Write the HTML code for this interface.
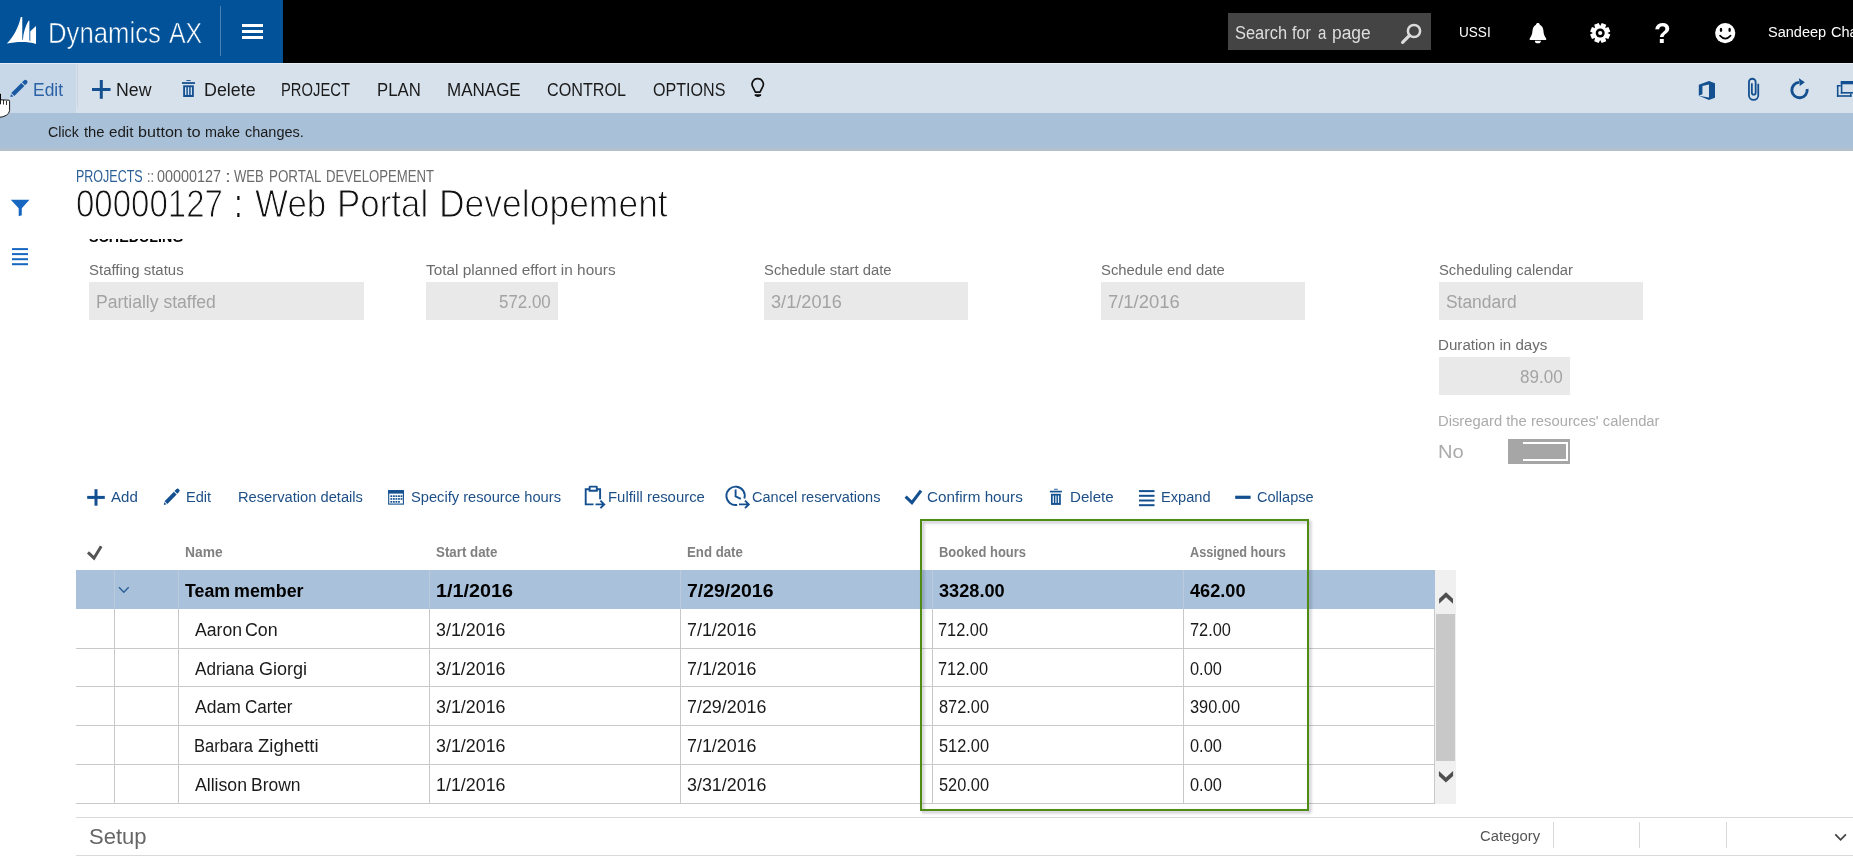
<!DOCTYPE html>
<html><head><meta charset="utf-8"><title>Dynamics AX</title>
<style>
html,body{margin:0;padding:0;background:#fff;}
body{width:1853px;height:865px;position:relative;overflow:hidden;font-family:"Liberation Sans",sans-serif;}
.t{position:absolute;white-space:nowrap;line-height:1;transform-origin:0 0;display:block;}
.b{position:absolute;display:block;}
</style></head><body>
<div class="b" style="left:0px;top:0px;width:1853px;height:63px;background:#000;"></div>
<div class="b" style="left:0px;top:0px;width:283px;height:63px;background:#02529a;"></div>
<div class="b" style="left:219.5px;top:6px;width:1.5px;height:50px;background:rgba(255,255,255,0.28);"></div>
<div class="b" style="left:242px;top:24px;width:21px;height:3px;background:#fff;"></div>
<div class="b" style="left:242px;top:30px;width:21px;height:3px;background:#fff;"></div>
<div class="b" style="left:242px;top:36px;width:21px;height:3px;background:#fff;"></div>
<span class="t" style="left:47.94px;top:19.00px;font-size:29px;color:#fff;transform:scaleX(0.8865);-webkit-text-stroke:0.55px #02529a;">Dynamics</span>
<span class="t" style="left:168.90px;top:19.00px;font-size:29px;color:#fff;transform:scaleX(0.8581);-webkit-text-stroke:0.55px #02529a;">AX</span>
<div class="b" style="left:1228px;top:13px;width:203px;height:37px;background:#444444;"></div>
<span class="t" style="left:1234.96px;top:24.00px;font-size:18px;color:#dedede;transform:scaleX(0.9129);">Search</span>
<span class="t" style="left:1292.46px;top:24.00px;font-size:18px;color:#dedede;transform:scaleX(0.8957);">for</span>
<span class="t" style="left:1317.60px;top:24.00px;font-size:18px;color:#dedede;transform:scaleX(0.8306);">a</span>
<span class="t" style="left:1331.67px;top:24.00px;font-size:18px;color:#dedede;transform:scaleX(0.9666);">page</span>
<span class="t" style="left:1459.28px;top:24.00px;font-size:15.5px;color:#fff;transform:scaleX(0.8761);">USSI</span>
<span class="t" style="left:1768.25px;top:24.00px;font-size:15.5px;color:#fff;transform:scaleX(0.9373);">Sandeep</span>
<span class="t" style="left:1830.77px;top:24.00px;font-size:15.5px;color:#fff;transform:scaleX(0.9373);">Chandra</span>
<div class="b" style="left:0px;top:63px;width:1853px;height:50px;background:#d7e1ec;"></div>
<div class="b" style="left:0px;top:63px;width:76px;height:50px;background:#c9d8e8;"></div>
<span class="t" style="left:33.11px;top:81.00px;font-size:18px;color:#2a62a5;transform:scaleX(0.9684);">Edit</span>
<span class="t" style="left:116.28px;top:81.00px;font-size:18px;color:#1a1a1a;transform:scaleX(0.9841);">New</span>
<span class="t" style="left:203.57px;top:81.00px;font-size:18px;color:#1a1a1a;transform:scaleX(0.9906);">Delete</span>
<span class="t" style="left:281.42px;top:81.00px;font-size:18px;color:#1a1a1a;transform:scaleX(0.8203);">PROJECT</span>
<span class="t" style="left:377.16px;top:81.00px;font-size:18px;color:#1a1a1a;transform:scaleX(0.9297);">PLAN</span>
<span class="t" style="left:446.74px;top:81.00px;font-size:18px;color:#1a1a1a;transform:scaleX(0.9448);">MANAGE</span>
<span class="t" style="left:546.79px;top:81.00px;font-size:18px;color:#1a1a1a;transform:scaleX(0.8974);">CONTROL</span>
<span class="t" style="left:652.78px;top:81.00px;font-size:18px;color:#1a1a1a;transform:scaleX(0.8932);">OPTIONS</span>
<div class="b" style="left:0px;top:113px;width:1853px;height:35px;background:#a9c0d9;"></div>
<div class="b" style="left:0px;top:148px;width:1853px;height:3px;background:#b3c1ce;"></div>
<div class="b" style="left:0px;top:63px;width:1853px;height:1px;background:#e6edf5;"></div>
<div class="b" style="left:77px;top:64px;width:1px;height:43px;background:#c9d3df;"></div>
<span class="t" style="left:47.79px;top:124.00px;font-size:15.5px;color:#1a1a1a;transform:scaleX(0.9182);">Click</span>
<span class="t" style="left:84.18px;top:124.00px;font-size:15.5px;color:#1a1a1a;transform:scaleX(0.9556);">the</span>
<span class="t" style="left:108.99px;top:124.00px;font-size:15.5px;color:#1a1a1a;transform:scaleX(0.9770);">edit</span>
<span class="t" style="left:138.35px;top:124.00px;font-size:15.5px;color:#1a1a1a;transform:scaleX(1.0396);">button</span>
<span class="t" style="left:186.95px;top:124.00px;font-size:15.5px;color:#1a1a1a;transform:scaleX(1.0587);">to</span>
<span class="t" style="left:205.17px;top:124.00px;font-size:15.5px;color:#1a1a1a;transform:scaleX(0.9256);">make</span>
<span class="t" style="left:244.82px;top:124.00px;font-size:15.5px;color:#1a1a1a;transform:scaleX(0.9353);">changes.</span>
<span class="t" style="left:76.00px;top:169.00px;font-size:15.75px;color:#2b5f96;transform:scaleX(0.7941);">PROJECTS</span>
<span class="t" style="left:146.77px;top:169.00px;font-size:15.75px;color:#6a6a6a;transform:scaleX(0.7958);">::</span>
<span class="t" style="left:157.43px;top:169.00px;font-size:15.75px;color:#6a6a6a;transform:scaleX(0.9116);">00000127</span>
<span class="t" style="left:225.11px;top:169.00px;font-size:15.75px;color:#6a6a6a;transform:scaleX(1.3367);">:</span>
<span class="t" style="left:234.13px;top:169.00px;font-size:15.75px;color:#6a6a6a;transform:scaleX(0.8294);">WEB</span>
<span class="t" style="left:268.53px;top:169.00px;font-size:15.75px;color:#6a6a6a;transform:scaleX(0.8505);">PORTAL</span>
<span class="t" style="left:326.25px;top:169.00px;font-size:15.75px;color:#6a6a6a;transform:scaleX(0.8346);">DEVELOPEMENT</span>
<span class="t" style="left:76.28px;top:184.00px;font-size:39px;color:#111;transform:scaleX(0.8469);-webkit-text-stroke:1.05px #fff;">00000127</span>
<span class="t" style="left:234.52px;top:184.00px;font-size:39px;color:#111;transform:scaleX(0.6208);">:</span>
<span class="t" style="left:254.53px;top:184.00px;font-size:39px;color:#111;transform:scaleX(0.8968);-webkit-text-stroke:1.05px #fff;">Web</span>
<span class="t" style="left:336.91px;top:184.00px;font-size:39px;color:#111;transform:scaleX(0.8946);-webkit-text-stroke:1.05px #fff;">Portal</span>
<span class="t" style="left:439.06px;top:184.00px;font-size:39px;color:#111;transform:scaleX(0.9095);-webkit-text-stroke:1.05px #fff;">Developement</span>
<div class="b" style="left:80px;top:239px;width:200px;height:8px;overflow:hidden;">
<span class="t" style="left:8.77px;top:-10.00px;font-size:15px;color:#000;transform:scaleX(0.9519);font-weight:bold;">SCHEDULING</span>
</div>
<span class="t" style="left:88.58px;top:262.00px;font-size:15.5px;color:#6c6c6c;transform:scaleX(0.9662);">Staffing status</span>
<div class="b" style="left:89px;top:282px;width:275px;height:38px;background:#e9e9e9;"></div>
<span class="t" style="left:95.59px;top:293.00px;font-size:18px;color:#a3a3a3;transform:scaleX(0.9766);">Partially staffed</span>
<span class="t" style="left:425.94px;top:262.00px;font-size:15.5px;color:#6c6c6c;transform:scaleX(0.9925);">Total planned effort in hours</span>
<div class="b" style="left:426px;top:282px;width:132px;height:38px;background:#e9e9e9;"></div>
<span class="t" style="left:498.82px;top:293.00px;font-size:18px;color:#a3a3a3;transform:scaleX(0.9399);">572.00</span>
<span class="t" style="left:763.58px;top:262.00px;font-size:15.5px;color:#6c6c6c;transform:scaleX(0.9554);">Schedule start date</span>
<div class="b" style="left:764px;top:282px;width:204px;height:38px;background:#e9e9e9;"></div>
<span class="t" style="left:771.02px;top:293.00px;font-size:18px;color:#a3a3a3;transform:scaleX(1.0098);">3/1/2016</span>
<span class="t" style="left:1100.58px;top:262.00px;font-size:15.5px;color:#6c6c6c;transform:scaleX(0.9580);">Schedule end date</span>
<div class="b" style="left:1101px;top:282px;width:204px;height:38px;background:#e9e9e9;"></div>
<span class="t" style="left:1108.33px;top:293.00px;font-size:18px;color:#a3a3a3;transform:scaleX(1.0234);">7/1/2016</span>
<span class="t" style="left:1438.73px;top:262.00px;font-size:15.5px;color:#6c6c6c;transform:scaleX(0.9541);">Scheduling calendar</span>
<div class="b" style="left:1439px;top:282px;width:204px;height:38px;background:#e9e9e9;"></div>
<span class="t" style="left:1445.97px;top:293.00px;font-size:18px;color:#a3a3a3;transform:scaleX(0.9669);">Standard</span>
<span class="t" style="left:1438.19px;top:337.00px;font-size:15.5px;color:#6c6c6c;transform:scaleX(0.9764);">Duration in days</span>
<div class="b" style="left:1439px;top:357px;width:131px;height:38px;background:#e9e9e9;"></div>
<span class="t" style="left:1520.48px;top:368.00px;font-size:18px;color:#a3a3a3;transform:scaleX(0.9470);">89.00</span>
<span class="t" style="left:1438.22px;top:413.00px;font-size:15.5px;color:#ababab;transform:scaleX(0.9543);">Disregard the resources' calendar</span>
<span class="t" style="left:1437.79px;top:443.00px;font-size:18px;color:#ababab;transform:scaleX(1.1159);">No</span>
<div class="b" style="left:1508px;top:439px;width:62px;height:25px;background:#a6a6a6;"></div>
<div class="b" style="left:1523px;top:441.5px;width:42.5px;height:15px;border:2.5px solid #fff;border-left:none;"></div>
<span class="t" style="left:111.00px;top:489.00px;font-size:15.5px;color:#1d4f87;transform:scaleX(0.9706);">Add</span>
<span class="t" style="left:185.74px;top:489.00px;font-size:15.5px;color:#1d4f87;transform:scaleX(0.9391);">Edit</span>
<span class="t" style="left:238.07px;top:489.00px;font-size:15.5px;color:#1d4f87;transform:scaleX(0.9477);">Reservation details</span>
<span class="t" style="left:410.59px;top:489.00px;font-size:15.5px;color:#1d4f87;transform:scaleX(0.9460);">Specify resource hours</span>
<span class="t" style="left:607.56px;top:489.00px;font-size:15.5px;color:#1d4f87;transform:scaleX(0.9614);">Fulfill resource</span>
<span class="t" style="left:751.77px;top:489.00px;font-size:15.5px;color:#1d4f87;transform:scaleX(0.9377);">Cancel reservations</span>
<span class="t" style="left:927.24px;top:489.00px;font-size:15.5px;color:#1d4f87;transform:scaleX(0.9841);">Confirm hours</span>
<span class="t" style="left:1070.04px;top:489.00px;font-size:15.5px;color:#1d4f87;transform:scaleX(0.9742);">Delete</span>
<span class="t" style="left:1160.58px;top:489.00px;font-size:15.5px;color:#1d4f87;transform:scaleX(0.9444);">Expand</span>
<span class="t" style="left:1257.27px;top:489.00px;font-size:15.5px;color:#1d4f87;transform:scaleX(0.9393);">Collapse</span>
<div class="b" style="left:76px;top:570px;width:1359px;height:39px;background:#a9c1da;"></div>
<div class="b" style="left:1435px;top:570px;width:21px;height:234px;background:#f0f0f0;"></div>
<div class="b" style="left:1436px;top:614px;width:19px;height:146.5px;background:#c8c8c8;"></div>
<div class="b" style="left:76px;top:648px;width:1359px;height:1px;background:#c9c9c9;"></div>
<div class="b" style="left:76px;top:686px;width:1359px;height:1px;background:#c9c9c9;"></div>
<div class="b" style="left:76px;top:725px;width:1359px;height:1px;background:#c9c9c9;"></div>
<div class="b" style="left:76px;top:764px;width:1359px;height:1px;background:#c9c9c9;"></div>
<div class="b" style="left:76px;top:803px;width:1359px;height:1px;background:#c9c9c9;"></div>
<div class="b" style="left:114px;top:609px;width:1px;height:195px;background:#c9c9c9;"></div>
<div class="b" style="left:178px;top:609px;width:1px;height:195px;background:#c9c9c9;"></div>
<div class="b" style="left:429px;top:609px;width:1px;height:195px;background:#c9c9c9;"></div>
<div class="b" style="left:680px;top:609px;width:1px;height:195px;background:#c9c9c9;"></div>
<div class="b" style="left:932px;top:609px;width:1px;height:195px;background:#c9c9c9;"></div>
<div class="b" style="left:1183px;top:609px;width:1px;height:195px;background:#c9c9c9;"></div>
<div class="b" style="left:1434px;top:609px;width:1px;height:195px;background:#c9c9c9;"></div>
<div class="b" style="left:114px;top:570px;width:1px;height:39px;background:#bccbdc;"></div>
<div class="b" style="left:178px;top:570px;width:1px;height:39px;background:#bccbdc;"></div>
<div class="b" style="left:429px;top:570px;width:1px;height:39px;background:#bccbdc;"></div>
<div class="b" style="left:680px;top:570px;width:1px;height:39px;background:#bccbdc;"></div>
<div class="b" style="left:932px;top:570px;width:1px;height:39px;background:#bccbdc;"></div>
<div class="b" style="left:1183px;top:570px;width:1px;height:39px;background:#bccbdc;"></div>
<span class="t" style="left:184.70px;top:545.00px;font-size:14px;color:#808080;transform:scaleX(0.9878);font-weight:bold;">Name</span>
<span class="t" style="left:436.20px;top:545.00px;font-size:14px;color:#808080;transform:scaleX(0.9508);font-weight:bold;">Start date</span>
<span class="t" style="left:687.14px;top:545.00px;font-size:14px;color:#808080;transform:scaleX(0.9449);font-weight:bold;">End date</span>
<span class="t" style="left:938.76px;top:545.00px;font-size:14px;color:#808080;transform:scaleX(0.9243);font-weight:bold;">Booked hours</span>
<span class="t" style="left:1190.18px;top:545.00px;font-size:14px;color:#808080;transform:scaleX(0.9060);font-weight:bold;">Assigned hours</span>
<span class="t" style="left:185.32px;top:582.00px;font-size:18px;color:#000;transform:scaleX(0.9874);font-weight:bold;">Team</span>
<span class="t" style="left:234.44px;top:582.00px;font-size:18px;color:#000;transform:scaleX(0.9930);font-weight:bold;">member</span>
<span class="t" style="left:436.31px;top:582.00px;font-size:18px;color:#000;transform:scaleX(1.0979);font-weight:bold;">1/1/2016</span>
<span class="t" style="left:687.22px;top:582.00px;font-size:18px;color:#000;transform:scaleX(1.0794);font-weight:bold;">7/29/2016</span>
<span class="t" style="left:938.80px;top:582.00px;font-size:18px;color:#000;transform:scaleX(1.0094);font-weight:bold;">3328.00</span>
<span class="t" style="left:1190.23px;top:582.00px;font-size:18px;color:#000;transform:scaleX(1.0076);font-weight:bold;">462.00</span>
<span class="t" style="left:194.75px;top:621.00px;font-size:18px;color:#1a1a1a;transform:scaleX(0.9797);">Aaron</span>
<span class="t" style="left:245.36px;top:621.00px;font-size:18px;color:#1a1a1a;transform:scaleX(0.9900);">Con</span>
<span class="t" style="left:436.29px;top:621.00px;font-size:18px;color:#1a1a1a;transform:scaleX(0.9919);">3/1/2016</span>
<span class="t" style="left:687.11px;top:621.00px;font-size:18px;color:#1a1a1a;transform:scaleX(0.9919);">7/1/2016</span>
<span class="t" style="left:938.43px;top:621.00px;font-size:18px;color:#1a1a1a;transform:scaleX(0.9082);">712.00</span>
<span class="t" style="left:1189.68px;top:621.00px;font-size:18px;color:#1a1a1a;transform:scaleX(0.9082);">72.00</span>
<span class="t" style="left:194.75px;top:660.00px;font-size:18px;color:#1a1a1a;transform:scaleX(0.9515);">Adriana</span>
<span class="t" style="left:258.70px;top:660.00px;font-size:18px;color:#1a1a1a;transform:scaleX(1.0022);">Giorgi</span>
<span class="t" style="left:436.29px;top:660.00px;font-size:18px;color:#1a1a1a;transform:scaleX(0.9919);">3/1/2016</span>
<span class="t" style="left:687.11px;top:660.00px;font-size:18px;color:#1a1a1a;transform:scaleX(0.9919);">7/1/2016</span>
<span class="t" style="left:938.43px;top:660.00px;font-size:18px;color:#1a1a1a;transform:scaleX(0.9082);">712.00</span>
<span class="t" style="left:1189.85px;top:660.00px;font-size:18px;color:#1a1a1a;transform:scaleX(0.9082);">0.00</span>
<span class="t" style="left:194.75px;top:698.00px;font-size:18px;color:#1a1a1a;transform:scaleX(0.9728);">Adam</span>
<span class="t" style="left:244.75px;top:698.00px;font-size:18px;color:#1a1a1a;transform:scaleX(0.9492);">Carter</span>
<span class="t" style="left:436.29px;top:698.00px;font-size:18px;color:#1a1a1a;transform:scaleX(0.9919);">3/1/2016</span>
<span class="t" style="left:687.11px;top:698.00px;font-size:18px;color:#1a1a1a;transform:scaleX(0.9919);">7/29/2016</span>
<span class="t" style="left:938.51px;top:698.00px;font-size:18px;color:#1a1a1a;transform:scaleX(0.9082);">872.00</span>
<span class="t" style="left:1189.85px;top:698.00px;font-size:18px;color:#1a1a1a;transform:scaleX(0.9082);">390.00</span>
<span class="t" style="left:194.28px;top:737.00px;font-size:18px;color:#1a1a1a;transform:scaleX(0.9193);">Barbara</span>
<span class="t" style="left:258.20px;top:737.00px;font-size:18px;color:#1a1a1a;transform:scaleX(1.0264);">Zighetti</span>
<span class="t" style="left:436.29px;top:737.00px;font-size:18px;color:#1a1a1a;transform:scaleX(0.9919);">3/1/2016</span>
<span class="t" style="left:687.11px;top:737.00px;font-size:18px;color:#1a1a1a;transform:scaleX(0.9919);">7/1/2016</span>
<span class="t" style="left:938.60px;top:737.00px;font-size:18px;color:#1a1a1a;transform:scaleX(0.9082);">512.00</span>
<span class="t" style="left:1189.85px;top:737.00px;font-size:18px;color:#1a1a1a;transform:scaleX(0.9082);">0.00</span>
<span class="t" style="left:194.75px;top:776.00px;font-size:18px;color:#1a1a1a;transform:scaleX(0.9809);">Allison</span>
<span class="t" style="left:251.11px;top:776.00px;font-size:18px;color:#1a1a1a;transform:scaleX(0.9686);">Brown</span>
<span class="t" style="left:435.66px;top:776.00px;font-size:18px;color:#1a1a1a;transform:scaleX(0.9919);">1/1/2016</span>
<span class="t" style="left:687.29px;top:776.00px;font-size:18px;color:#1a1a1a;transform:scaleX(0.9919);">3/31/2016</span>
<span class="t" style="left:938.60px;top:776.00px;font-size:18px;color:#1a1a1a;transform:scaleX(0.9082);">520.00</span>
<span class="t" style="left:1189.85px;top:776.00px;font-size:18px;color:#1a1a1a;transform:scaleX(0.9082);">0.00</span>
<div class="b" style="left:920px;top:519px;width:385px;height:288px;border:2px solid #4f8c14;filter:drop-shadow(2px 2px 1.6px rgba(50,40,70,0.34));"></div>
<div class="b" style="left:76px;top:817px;width:1777px;height:1px;background:#d9d9d9;"></div>
<div class="b" style="left:76px;top:855px;width:1777px;height:1px;background:#d9d9d9;"></div>
<span class="t" style="left:88.71px;top:826.00px;font-size:22px;color:#666;transform:scaleX(1.0009);">Setup</span>
<span class="t" style="left:1480.06px;top:828.00px;font-size:15.5px;color:#555;transform:scaleX(0.9557);">Category</span>
<div class="b" style="left:1553px;top:822px;width:1px;height:26px;background:#d8d8d8;"></div>
<div class="b" style="left:1639px;top:822px;width:1px;height:26px;background:#d8d8d8;"></div>
<div class="b" style="left:1726px;top:822px;width:1px;height:26px;background:#d8d8d8;"></div>
<svg class="b" style="left:0;top:0" width="1853" height="865" viewBox="0 0 1853 865"><path d="M6.83 43.62 C13.5 36.5 18.5 27.5 20.78 16.9 L22.26 16.9 L22.26 39.46 L22.86 40.06 C23.3 32.5 25.6 25.8 28.5 20.76 L29.39 20.76 L29.39 40.35 L30.28 41.24 L30.28 31.15 L36.03 26.1 L36.03 43.92 C28 41.3 16 41.6 6.83 43.62 Z" fill="#fff" stroke="none" stroke-width="0" /><circle cx="1414" cy="31" r="6.1" fill="none" stroke="#dcdcdc" stroke-width="2.5"/><path d="M1409.6 35.4 L1402.6 42.4" fill="none" stroke="#dcdcdc" stroke-width="3.2" stroke-linecap="round"/><path d="M1537.9 23 C1539 23 1539.7 23.7 1539.8 24.7 C1542 25.6 1543.2 27.9 1543.4 30.6 C1543.6 34 1544.5 36.5 1546.2 38.4 L1546.2 39.9 L1529.7 39.9 L1529.7 38.4 C1531.4 36.5 1532.3 34 1532.5 30.6 C1532.7 27.9 1533.9 25.6 1536 24.7 C1536.1 23.7 1536.8 23 1537.9 23 Z" fill="#fff" stroke="none" stroke-width="0" /><path d="M1534.9 40.7 A3 2.6 0 0 0 1540.9 40.7 Z" fill="#fff" stroke="none" stroke-width="0" /><path d="M1607.50 33.11 L1610.28 34.56 L1608.43 39.02 L1605.44 38.08 L1605.28 38.24 L1606.22 41.23 L1601.76 43.08 L1600.31 40.30 L1600.09 40.30 L1598.64 43.08 L1594.18 41.23 L1595.12 38.24 L1594.96 38.08 L1591.97 39.02 L1590.12 34.56 L1592.90 33.11 L1592.90 32.89 L1590.12 31.44 L1591.97 26.98 L1594.96 27.92 L1595.12 27.76 L1594.18 24.77 L1598.64 22.92 L1600.09 25.70 L1600.31 25.70 L1601.76 22.92 L1606.22 24.77 L1605.28 27.76 L1605.44 27.92 L1608.43 26.98 L1610.28 31.44 L1607.50 32.89 Z" fill="#fff" stroke="none" stroke-width="0" /><circle cx="1600.2" cy="33" r="4.5" fill="#000"/><circle cx="1600.2" cy="33" r="2.1" fill="#fff"/><circle cx="1725.2" cy="33.1" r="10.1" fill="#fff"/><ellipse cx="1721" cy="29.9" rx="1.25" ry="2.1" fill="#000"/><ellipse cx="1729.6" cy="29.9" rx="1.25" ry="2.1" fill="#000"/><path d="M1720 35.6 Q1725.3 41.6 1730.6 35.6" fill="none" stroke="#000" stroke-width="1.6" stroke-linecap="round"/><g transform="translate(10.4,96.9) rotate(-45.00)" fill="#1a5aa3"><path d="M0 0 L2.45 -1.72 L2.45 1.72 Z"/><rect x="3.38" y="-2.15" width="14.23" height="4.3"/><path d="M18.55 -2.15 L21.18 -2.15 A2.15 2.15 0 0 1 21.18 2.15 L18.55 2.15 Z"/></g><g transform="translate(163.8,504.9) rotate(-45.93)" fill="#14508f"><path d="M0 0 L2.29 -1.56 L2.29 1.56 Z"/><rect x="3.17" y="-1.95" width="13.33" height="3.9"/><path d="M17.37 -1.95 L19.90 -1.95 A1.95 1.95 0 0 1 19.90 1.95 L17.37 1.95 Z"/></g><rect x="92" y="88" width="18.50" height="3.00" fill="#14508f"/><rect x="99.8" y="80" width="3.00" height="18.80" fill="#14508f"/><rect x="87.2" y="495.9" width="17.60" height="3.00" fill="#14508f"/><rect x="94.5" y="489.2" width="3.00" height="16.50" fill="#14508f"/><rect x="186.42" y="80.1" width="4.16" height="0.93" fill="#14508f"/><rect x="182" y="82.128" width="13.00" height="1.77" fill="#14508f"/><rect x="183.17" y="85.339" width="10.66" height="11.66" fill="#14508f"/><rect x="185.00885" y="87.198" width="1.33" height="7.77" fill="#cfe0f2"/><rect x="187.83375" y="87.198" width="1.33" height="7.77" fill="#cfe0f2"/><rect x="190.65865000000002" y="87.198" width="1.33" height="7.77" fill="#cfe0f2"/><rect x="1053.98" y="488.8" width="3.84" height="0.89" fill="#14508f"/><rect x="1049.9" y="490.732" width="12.00" height="1.69" fill="#14508f"/><rect x="1050.98" y="493.791" width="9.84" height="11.11" fill="#14508f"/><rect x="1052.6774" y="495.562" width="1.23" height="7.41" fill="#e3eefa"/><rect x="1055.285" y="495.562" width="1.23" height="7.41" fill="#e3eefa"/><rect x="1057.8926000000001" y="495.562" width="1.23" height="7.41" fill="#e3eefa"/><path d="M757.7 78.7 A5.6 5.6 0 0 1 762.4 87.4 L760 92.2 L755.4 92.2 L753 87.4 A5.6 5.6 0 0 1 757.7 78.7 Z" fill="none" stroke="#111" stroke-width="1.7" stroke-linejoin="round"/><path d="M754.7 94.2 L761.1 94.2 L761.1 95.3 Q760.3 97 757.9 97 Q755.5 97 754.7 95.3 Z" fill="#111" stroke="none" stroke-width="0" /><path d="M1698.80 95.65 L1698.80 84.78 L1708.98 81.00 L1715.00 83.13 L1715.00 97.69 L1708.98 99.90 L1698.80 95.65 L1708.98 97.54 L1708.98 84.39 L1702.43 86.12 L1702.43 94.31 Z" fill="#14508f" stroke="none" stroke-width="0" fill-rule="evenodd"/><path d="M1758.25 83.7 V95.3 a4.65 4.65 0 0 1 -9.3 0 V82.1 a3.35 3.35 0 0 1 6.7 0 V92.8 a1.9 1.9 0 0 1 -3.8 0 V83.2" fill="none" stroke="#14508f" stroke-width="1.8" /><path d="M1807.13 89.03 A7.7 7.7 0 1 1 1799.23 82.40" fill="none" stroke="#14508f" stroke-width="2.9" /><path d="M1798.93 78.20 L1804.83 82.20 L1799.83 86.00 Z" fill="#14508f" stroke="none" stroke-width="0" /><rect x="1840.8" y="81" width="12.20" height="3.30" fill="#14508f"/><rect x="1840.8" y="81" width="1.60" height="12.60" fill="#14508f"/><rect x="1840.8" y="92" width="12.20" height="1.60" fill="#14508f"/><rect x="1836.9" y="85" width="1.60" height="11.80" fill="#14508f"/><rect x="1836.9" y="85" width="3.90" height="1.50" fill="#14508f"/><rect x="1836.9" y="95.2" width="14.60" height="1.60" fill="#14508f"/><rect x="1850" y="93.6" width="1.50" height="3.20" fill="#14508f"/><path d="M10.8 199.8 L29.5 199.8 L21.8 208.2 L21.8 215.2 L18.7 216.2 L18.7 208.2 Z" fill="#1767c1" stroke="none" stroke-width="0" /><rect x="12" y="248.1" width="16.00" height="2.00" fill="#1767c1"/><rect x="12" y="253.1" width="16.00" height="2.00" fill="#1767c1"/><rect x="12" y="258.2" width="16.00" height="2.00" fill="#1767c1"/><rect x="12" y="263.2" width="16.00" height="2.00" fill="#1767c1"/><rect x="388.7" y="490.7" width="14.7" height="13.4" fill="none" stroke="#14508f" stroke-width="1.1"/><rect x="388.2" y="490.2" width="15.70" height="3.40" fill="#14508f"/><rect x="390.4" y="495.3" width="1.80" height="1.70" fill="#14508f"/><rect x="392.95" y="495.3" width="1.80" height="1.70" fill="#14508f"/><rect x="395.5" y="495.3" width="1.80" height="1.70" fill="#14508f"/><rect x="398.04999999999995" y="495.3" width="1.80" height="1.70" fill="#14508f"/><rect x="400.59999999999997" y="495.3" width="1.80" height="1.70" fill="#14508f"/><rect x="390.4" y="498.1" width="1.80" height="1.70" fill="#14508f"/><rect x="392.95" y="498.1" width="1.80" height="1.70" fill="#14508f"/><rect x="395.5" y="498.1" width="1.80" height="1.70" fill="#14508f"/><rect x="398.04999999999995" y="498.1" width="1.80" height="1.70" fill="#14508f"/><rect x="400.59999999999997" y="498.1" width="1.80" height="1.70" fill="#14508f"/><rect x="390.4" y="501.0" width="1.80" height="1.70" fill="#14508f"/><rect x="392.95" y="501.0" width="1.80" height="1.70" fill="#14508f"/><rect x="395.5" y="501.0" width="1.80" height="1.70" fill="#14508f"/><rect x="398.04999999999995" y="501.0" width="1.80" height="1.70" fill="#14508f"/><path d="M593.5 504.4 H585.7 V489.2 H589.6 V487 Q589.6 486.6 590.1 486.6 H596.3 Q596.8 486.6 596.8 487 V489.2 H600.1 V499.2 M589.6 489.2 V490.8 H596.8 V489.2" fill="none" stroke="#14508f" stroke-width="1.9" /><path d="M595.5 504.4 H604 M600.4 500.6 L604.2 504.4 L600.4 508.2" fill="none" stroke="#14508f" stroke-width="1.9" /><path d="M737.2 504.9 A9.2 9.2 0 1 1 744.4 498.5" fill="none" stroke="#14508f" stroke-width="1.9" /><path d="M735.6 489.6 V496.4 L740.8 498.9" fill="none" stroke="#14508f" stroke-width="1.9" /><path d="M739 504.4 H748.6 M745 500.6 L748.8 504.4 L745 508.2" fill="none" stroke="#14508f" stroke-width="1.9" /><path d="M905.6 496.6 L911.9 502.7 L921 490.6" fill="none" stroke="#14508f" stroke-width="3.1" /><rect x="1139" y="490.1" width="15.50" height="2.00" fill="#14508f"/><rect x="1139" y="494.8" width="15.50" height="2.00" fill="#14508f"/><rect x="1139" y="499.5" width="15.50" height="2.00" fill="#14508f"/><rect x="1139" y="504.2" width="15.50" height="2.00" fill="#14508f"/><rect x="1235.2" y="495.7" width="15.40" height="3.20" fill="#14508f"/><path d="M88 552.4 L94 558.2 L101.2 546.2" fill="none" stroke="#555" stroke-width="3.0" /><path d="M119 587.2 L123.8 592.2 L128.7 587.2" fill="none" stroke="#2b5f96" stroke-width="1.4" /><path d="M1446 592.3 L1453 598.8 L1453 603.8 L1446 597.2 L1439.1 603.8 L1439.1 598.8 Z" fill="#4f4f4f" stroke="none" stroke-width="0" /><path d="M1445.9 782.6 L1453.1 776.1 L1453.1 771 L1445.9 777.6 L1438.9 771 L1438.9 776.1 Z" fill="#4f4f4f" stroke="none" stroke-width="0" /><path d="M1835.3 834.3 L1840.6 839.8 L1845.9 834.3" fill="none" stroke="#444" stroke-width="1.8" /><path d="M-2 94 L0.5 94 L0.5 99.8 L9 100.2 Q9.6 100.3 9.6 101.2 L9.6 110.5 Q9 116.5 -2 117.6 Z" fill="#fff" stroke="#000" stroke-width="0.9" /><rect x="0" y="94.1" width="0.90" height="10.20" fill="#000"/><rect x="3.1" y="100" width="0.80" height="4.50" fill="#000"/><rect x="6" y="101" width="0.80" height="4.00" fill="#000"/></svg>
<span class="t" style="left:1654.46px;top:19.00px;font-size:29px;color:#fff;transform:scaleX(0.9466);font-weight:bold;">?</span>
</body></html>
